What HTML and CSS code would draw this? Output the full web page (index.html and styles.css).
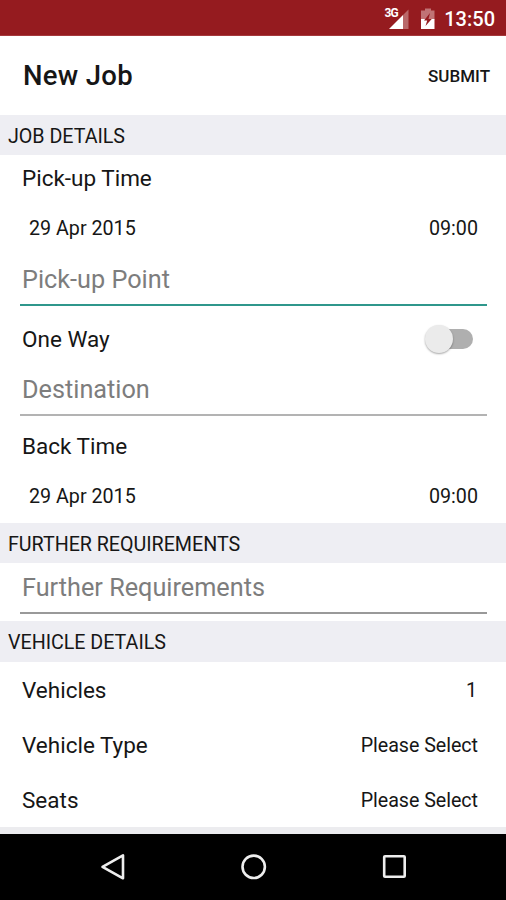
FILE: index.html
```html
<!DOCTYPE html>
<html lang="en">
<head>
<meta charset="utf-8">
<title>New Job</title>
<link rel="stylesheet" href="styles.css">
</head>
<body>
<div class="screen">
  <div class="status">
    <svg class="signal" width="26" height="24" viewBox="0 0 26 24">
      <path d="M24.500 2.500v19.500H19V8z" fill="#b9686a"/>
      <path d="M19 8v14H5z" fill="#fff"/>
      <text class="network" x="0.500" y="10">3G</text>
    </svg>
    <svg class="battery" width="16" height="22" viewBox="0 0 16 22">
      <path d="M5 .5h6V2.500h3.500v9H1v-9h4z" fill="#c07375"/>
      <path d="M1 11h13.500v10H1z" fill="#fff"/>
      <path d="M10 5L4 12.500h3.200L5.500 18l6.200-7H8.500z" fill="#951b1f"/>
    </svg>
    <span class="clock">13:50</span>
  </div>
  <header class="appbar">
    <h1 class="title">New Job</h1>
    <button class="submit">SUBMIT</button>
  </header>
  <main class="form">
    <h2 class="section">JOB DETAILS</h2>
    <div class="row heading"><span class="label">Pick-up Time</span></div>
    <div class="row datetime"><span class="value">29 Apr 2015</span><span class="value">09:00</span></div>
    <div class="field focused"><span>Pick-up Point</span></div>
    <div class="row oneway"><span class="label">One Way</span><span class="switch"><span class="thumb"></span></span></div>
    <div class="field destination"><span>Destination</span></div>
    <div class="row back"><span class="label">Back Time</span></div>
    <div class="row datetime second"><span class="value">29 Apr 2015</span><span class="value">09:00</span></div>
    <h2 class="section">FURTHER REQUIREMENTS</h2>
    <div class="field further"><span>Further Requirements</span></div>
    <h2 class="section last">VEHICLE DETAILS</h2>
    <div class="row pick"><span class="label">Vehicles</span><span class="value count">1</span></div>
    <div class="row pick"><span class="label">Vehicle Type</span><span class="value choice">Please Select</span></div>
    <div class="row pick"><span class="label">Seats</span><span class="value choice">Please Select</span></div>
  </main>
  <nav class="navbar">
    <svg width="28" height="30" viewBox="0 0 28 30"><path d="M24 3.300v23L3.500 14.800z"/></svg>
    <svg width="28" height="30" viewBox="0 0 28 30"><circle cx="13.700" cy="14.800" r="11.200"/></svg>
    <svg width="28" height="30" viewBox="0 0 28 30"><rect x="4.200" y="4.300" width="20.500" height="20.500" rx=".8"/></svg>
  </nav>
</div>
</body>
</html>
```
FILE: styles.css
```css
* { box-sizing: border-box; }
body { margin: 0; background: #fff; color: #161616; font-family: Roboto, "Liberation Sans", sans-serif; }
.screen { display: flex; flex-direction: column; width: 506px; height: 900px; overflow: hidden; }
h1, h2 { margin: 0; font-weight: 400; }

.status { display: flex; align-items: center; justify-content: flex-end; height: 36px; padding: 2px 11px 0 0; background: #951b1f; color: #fff; border-bottom: 1px solid #a5393c; }
.network { font-size: 12px; font-weight: 700; fill: #fff; letter-spacing: -.9px; }
.signal { margin-right: 10px; }
.battery { margin-right: 8px; }
.clock { font-size: 20px; font-weight: 500; line-height: 34px; }

.appbar { display: flex; align-items: center; justify-content: space-between; height: 79px; padding: 0 16px 0 23px; }
.title { font-size: 27.500px; font-weight: 500; line-height: 36px; letter-spacing: .3px; }
.submit { padding: 0; border: 0; background: none; color: #161616; font: 500 17px/24px Roboto, "Liberation Sans", sans-serif; }

.section { height: 40px; padding-left: 8px; background: #eeeef3; font-size: 19.700px; line-height: 43px; letter-spacing: -.03px; white-space: nowrap; }
.last { height: 41px; }

.row { display: flex; align-items: center; justify-content: space-between; padding: 0 28px 0 22px; }
.label { font-size: 22.500px; }
.value { font-size: 19.700px; }
.choice { letter-spacing: -.05px; }
.count { margin-right: 1px; }
.heading { height: 47px; padding-bottom: 2px; }
.datetime { height: 52px; padding-left: 29px; }
.oneway { height: 67px; padding-right: 33px; padding-bottom: 2px; }
.back { height: 61px; padding-bottom: 1px; }
.second { height: 46px; padding-bottom: 8px; }
.pick { height: 55px; }
.pick .value { padding-top: 2px; }

.field { margin: 0 19px 0 20px; padding-left: 2px; border-bottom: 2px solid #b3b3b3; color: #7d7d7d; font-size: 25.250px; line-height: 30px; white-space: nowrap; }
.focused { height: 52px; padding-top: 11px; border-color: #2f978c; }
.destination { height: 43px; padding-top: 2px; }
.further { height: 51px; margin-bottom: 7px; padding-top: 10px; border-color: #999; }

.switch { position: relative; width: 40px; height: 20px; border-radius: 10px; background: #afafaf; }
.thumb { position: absolute; left: -8px; top: -4px; width: 28px; height: 28px; border-radius: 50%; background: #ebebeb; box-shadow: 0 1px 2px rgba(0, 0, 0, .35); }

.form { height: 719px; border-bottom: 7px solid #ececef; }
.navbar { display: flex; align-items: center; justify-content: space-between; height: 66px; padding: 0 98px 0 99px; background: #000; }
.navbar svg { fill: none; stroke: #eee; stroke-width: 2.600; stroke-linejoin: round; }
```
